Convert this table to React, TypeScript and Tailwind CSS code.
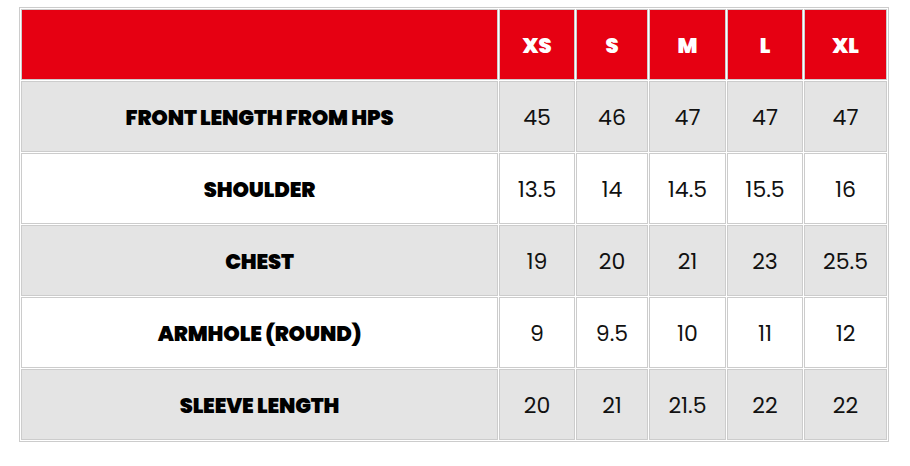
const sizes = ["XS", "S", "M", "L", "XL"];

const rows: { label: string; values: string[] }[] = [
  { label: "FRONT LENGTH FROM HPS", values: ["45", "46", "47", "47", "47"] },
  { label: "SHOULDER", values: ["13.5", "14", "14.5", "15.5", "16"] },
  { label: "CHEST", values: ["19", "20", "21", "23", "25.5"] },
  { label: "ARMHOLE (ROUND)", values: ["9", "9.5", "10", "11", "12"] },
  { label: "SLEEVE LENGTH", values: ["20", "21", "21.5", "22", "22"] },
];

const font = { fontFamily: "Poppins, Inter, 'Noto Sans', sans-serif" };

export default function App() {
  return (
    <div className="w-[910px] h-[466px] bg-white pt-[7px] pl-[19px]" style={font}>
      <div className="w-[870px] border border-[#cccccc] p-px bg-white">
        <div className="grid grid-cols-[477px_76px_72px_77px_76px_83px] auto-rows-[71px] gap-px">
          <div className="border border-[#cccccc] bg-[#e60012]" />
          {sizes.map((s) => (
            <div
              key={s}
              className="border border-[#cccccc] bg-[#e60012] flex items-center justify-center pt-[2px] text-white text-[21px] font-black"
            >
              {s}
            </div>
          ))}
          {rows.map((row, i) => {
            const bg = i % 2 === 0 ? "bg-[#e4e4e4]" : "bg-white";
            return [
              <div
                key={row.label}
                className={`border border-[#cccccc] ${bg} flex items-center justify-center pt-[2px] text-black text-[21px] font-black tracking-[-0.15px]`}
              >
                {row.label}
              </div>,
              ...row.values.map((v, j) => (
                <div
                  key={row.label + j}
                  className={`border border-[#cccccc] ${bg} flex items-center justify-center pt-[2px] text-[#111] text-[22px] font-normal`}
                >
                  {v}
                </div>
              )),
            ];
          })}
        </div>
      </div>
    </div>
  );
}
